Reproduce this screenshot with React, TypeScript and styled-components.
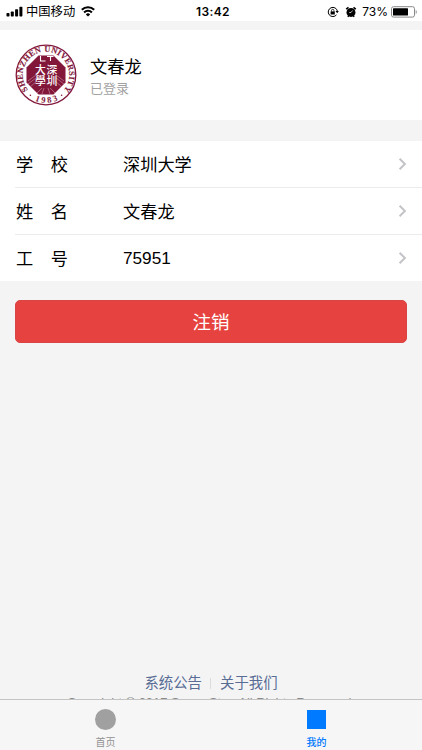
import React from 'react';
import styled, { createGlobalStyle } from 'styled-components';

const GlobalStyle = createGlobalStyle`
  * {
    box-sizing: border-box;
  }

  body {
    margin: 0;
    background: #f4f4f4;
    font-family: 'Liberation Sans', 'Noto Sans CJK SC', sans-serif;
    color: #000;
  }
`;

interface TabProps {
  active?: boolean;
}

interface CellData {
  label: [string, string];
  value: string;
  numeric?: boolean;
}

const Screen = styled.div`
  display: flex;
  flex-direction: column;
  height: 750px;
  overflow: hidden;
`;

// Status bar
const StatusBar = styled.header`
  display: grid;
  grid-template-columns: 1fr auto 1fr;
  align-items: center;
  flex: none;
  height: 21px;
  padding: 1px 4px 0 6px;
  background: #fff;
  font-size: 12px;
  line-height: 20px;
`;

const StatusGroup = styled.div<{ end?: boolean }>`
  display: flex;
  align-items: center;
  justify-content: ${props => (props.end ? 'flex-end' : 'flex-start')};
`;

const Carrier = styled.span`
  margin: 1px 6px 0 3px;
  font-size: 12.3px;
`;

const Clock = styled.span`
  padding-left: 2px;
  font-family: Inter, sans-serif;
  font-size: 12px;
  font-weight: 600;
  letter-spacing: 0.35px;
`;

const Battery = styled.span`
  margin: 0 3px 0 5px;
  font-family: Inter, sans-serif;
  font-size: 12px;
`;

// Page body
const Content = styled.main`
  display: flex;
  flex-direction: column;
  flex: 1;
  min-height: 0;
  padding-top: 9px;
  overflow: hidden;
`;

const Profile = styled.section`
  display: flex;
  align-items: center;
  flex: none;
  height: 90px;
  padding-left: 15px;
  background: #fff;
`;

const ProfileText = styled.div`
  margin: 4px 0 0 13px;
`;

const Name = styled.div`
  font-size: 17.3px;
  line-height: 24px;
`;

const LoginState = styled.div`
  font-size: 13px;
  line-height: 20px;
  color: #a2a2a2;
`;

const CellList = styled.section`
  flex: none;
  height: 140px;
  margin-top: 21px;
  padding-left: 15px;
  background: #fff;
`;

const Cell = styled.div`
  display: flex;
  align-items: center;
  height: 47px;
  padding-right: 15px;
  border-bottom: 1px solid #ececec;
  font-size: 17.2px;

  &:last-child {
    height: 46px;
    border-bottom: none;
  }
`;

const CellLabel = styled.span`
  display: flex;
  justify-content: space-between;
  width: 53px;
  margin-right: 55px;
  padding: 0 0 2px 1px;
`;

const CellValue = styled.span<{ numeric?: boolean }>`
  flex: 1;
  padding-bottom: ${props => (props.numeric ? 0 : 2)}px;
`;

const LogoutButton = styled.button`
  flex: none;
  height: 43px;
  margin: 19px 15px 0;
  padding: 0 0 1px;
  border: 1px solid #d94444;
  border-radius: 5px;
  background: #e64340;
  color: #fff;
  font-family: inherit;
  font-size: 18.5px;
`;

const Footer = styled.footer`
  flex: none;
  height: 27px;
  margin-top: auto;
  text-align: center;
`;

const FooterLinks = styled.nav`
  display: flex;
  align-items: center;
  justify-content: center;
  height: 22px;
`;

const FooterLink = styled.a`
  font-size: 14.4px;
  line-height: 20px;
  color: #586c94;
`;

const Separator = styled.span`
  width: 1px;
  height: 11px;
  margin: 0 9px 0 8px;
  background: #dcdcdc;
`;

const Copyright = styled.p`
  margin: 2px 0 0;
  font-size: 12.9px;
  line-height: 14px;
  color: #8a8a8a;
  white-space: nowrap;
`;

// Bottom tabs
const TabBar = styled.nav`
  display: flex;
  flex: none;
  height: 51px;
  border-top: 1px solid #c4c4c4;
  background: #f6f6f6;
`;

const Tab = styled.div<TabProps>`
  display: flex;
  flex: 1;
  flex-direction: column;
  align-items: center;
  padding-top: 9px;
  font-size: 10px;
  line-height: 14px;
  font-weight: ${props => (props.active ? 500 : 400)};
  color: ${props => (props.active ? '#007aff' : '#929292')};
`;

const TabShape = styled.span<TabProps>`
  width: ${props => (props.active ? 19 : 21)}px;
  height: ${props => (props.active ? 19 : 21)}px;
  margin: ${props => (props.active ? '1px 0 7px' : '0 0 6px')};
  border-radius: ${props => (props.active ? '0' : '50%')};
  background: ${props => (props.active ? '#007aff' : '#a0a0a0')};
`;

const Signal = () => (
  <svg width="17" height="11" viewBox="0 0 17 11">
    <rect x="0.5" y="7" width="3" height="3.5" rx="0.7" />
    <rect x="4.8" y="5.5" width="3" height="5" rx="0.7" />
    <rect x="9.1" y="3.3" width="3" height="7.2" rx="0.7" />
    <rect x="13.4" y="0.7" width="3" height="9.8" rx="0.7" />
  </svg>
);

const Wifi = () => (
  <svg width="14" height="11" viewBox="0 0 14 11" fill="none" stroke="#000" strokeWidth="2.1">
    <path d="M0.8 3.7a9 9 0 0 1 12.4 0" />
    <path d="M3.1 6.4a5.6 5.6 0 0 1 7.8 0" />
    <path d="M7 10.6L4.8 8.4a3.2 3.2 0 0 1 4.4 0z" fill="#000" stroke="none" />
  </svg>
);

const RotationLock = () => (
  <svg width="12" height="12" viewBox="0 0 12 12" fill="none" stroke="#000">
    <path d="M9.5 8.8A4.6 4.6 0 1 1 10.4 5.2" />
    <path d="M8.5 5h3.4l-1.7 2.2z" fill="#000" stroke="none" />
    <rect x="3.6" y="5.4" width="4.2" height="3.1" fill="#000" stroke="none" />
    <path d="M4.5 5.6V4.5a1.2 1.2 0 0 1 2.4 0v1.1" strokeWidth="0.8" />
  </svg>
);

const AlarmSvg = styled.svg`
  margin-left: 6px;
`;

const Alarm = () => (
  <AlarmSvg width="12" height="12" viewBox="0 0 12 12">
    <circle cx="6" cy="6.4" r="4.5" />
    <path d="M1.2 3.2L3.5 1.3M10.8 3.2L8.5 1.3M2.8 10.8l.9-1M9.2 10.8l-.9-1" stroke="#000" strokeWidth="1.5" />
    <path d="M7.6 4.5L6 6.5H4.2" fill="none" stroke="#fff" strokeWidth="0.7" />
  </AlarmSvg>
);

const BatteryIcon = () => (
  <svg width="27" height="12" viewBox="0 0 27 12">
    <rect x="0.5" y="0.7" width="23" height="10.4" rx="2" fill="#fff" stroke="#888" />
    <rect x="2" y="2.2" width="15" height="7.4" rx="0.5" />
    <path d="M24.7 4v4c1.5-.4 1.5-3.6 0-4z" fill="#999" />
  </svg>
);

const Seal = () => (
  <svg width="62" height="62" viewBox="0 0 62 62">
    <defs>
      <path id="ring" d="M13.4 46.2A23.25 23.25 0 1 1 48.6 46.2" />
      <path id="year" d="M14.5 53.6A28 28 0 0 0 47.5 53.6" />
    </defs>
    <circle cx="31" cy="31" r="29.8" fill="#fff" stroke="#82173a" strokeWidth="1.3" />
    <g fill="#82173a" fontFamily="'Liberation Serif', serif" fontWeight="700">
      <text fontSize="8.2" stroke="#82173a" strokeWidth="0.15">
        <textPath href="#ring" startOffset="0.5" textLength="105" lengthAdjust="spacing">SHENZHEN UNIVERSITY</textPath>
      </text>
      <text fontSize="8.6">
        <textPath href="#year" startOffset="6" textLength="24">1983</textPath>
      </text>
      <circle cx="15.4" cy="51.2" r="0.8" />
      <circle cx="46.6" cy="51.2" r="0.8" />
    </g>
    <path d="M23.5 11.5h15L50.5 23.5v15L38.5 50.5h-15L11.5 38.5v-15z" fill="#82173a" />
    <path
      d="M13 37l8-6M13 40l8-6M15 43l7-6M49 37l-8-6M49 40l-8-6M47 43l-7-6M22 49l5-5M27 50l2-6M35 50l-2-6M40 49l-5-5"
      stroke="#c993a5"
      strokeWidth="0.6"
    />
    <path d="M25.5 12v5h5M32 12.5h6.5M35.5 12.5v4.5" fill="none" stroke="#fff" strokeWidth="1.1" />
    <g fill="#fff" fontFamily="'Noto Sans CJK TC', sans-serif" fontSize="10.8" fontWeight="500">
      <text x="20" y="29.8">大</text>
      <text x="20" y="41.2">學</text>
      <text x="31.4" y="29.8">深</text>
      <text x="31.4" y="41.2">圳</text>
    </g>
  </svg>
);

const Arrow = () => (
  <svg width="9" height="14" viewBox="0 0 9 14" fill="none" stroke="#c4c4c8" strokeWidth="2">
    <path d="M1.6 1.8L6.9 7 1.6 12.2" />
  </svg>
);

const cells: CellData[] = [
  { label: ['学', '校'], value: '深圳大学' },
  { label: ['姓', '名'], value: '文春龙' },
  { label: ['工', '号'], value: '75951', numeric: true },
];

const App: React.FC = () => {
  return (
    <Screen>
      <GlobalStyle />

      <StatusBar>
        <StatusGroup>
          <Signal />
          <Carrier>中国移动</Carrier>
          <Wifi />
        </StatusGroup>
        <Clock>13:42</Clock>
        <StatusGroup end>
          <RotationLock />
          <Alarm />
          <Battery>73%</Battery>
          <BatteryIcon />
        </StatusGroup>
      </StatusBar>

      <Content>
        <Profile>
          <Seal />
          <ProfileText>
            <Name>文春龙</Name>
            <LoginState>已登录</LoginState>
          </ProfileText>
        </Profile>

        <CellList>
          {cells.map((cell: CellData) => (
            <Cell key={cell.label.join('')}>
              <CellLabel>
                <span>{cell.label[0]}</span>
                <span>{cell.label[1]}</span>
              </CellLabel>
              <CellValue numeric={cell.numeric}>{cell.value}</CellValue>
              <Arrow />
            </Cell>
          ))}
        </CellList>

        <LogoutButton>注销</LogoutButton>

        <Footer>
          <FooterLinks>
            <FooterLink>系统公告</FooterLink>
            <Separator />
            <FooterLink>关于我们</FooterLink>
          </FooterLinks>
          <Copyright>Copyright © 2017 Super Star. All Rights Reserved.</Copyright>
        </Footer>
      </Content>

      <TabBar>
        <Tab>
          <TabShape />
          首页
        </Tab>
        <Tab active>
          <TabShape active />
          我的
        </Tab>
      </TabBar>
    </Screen>
  );
};

export default App;
